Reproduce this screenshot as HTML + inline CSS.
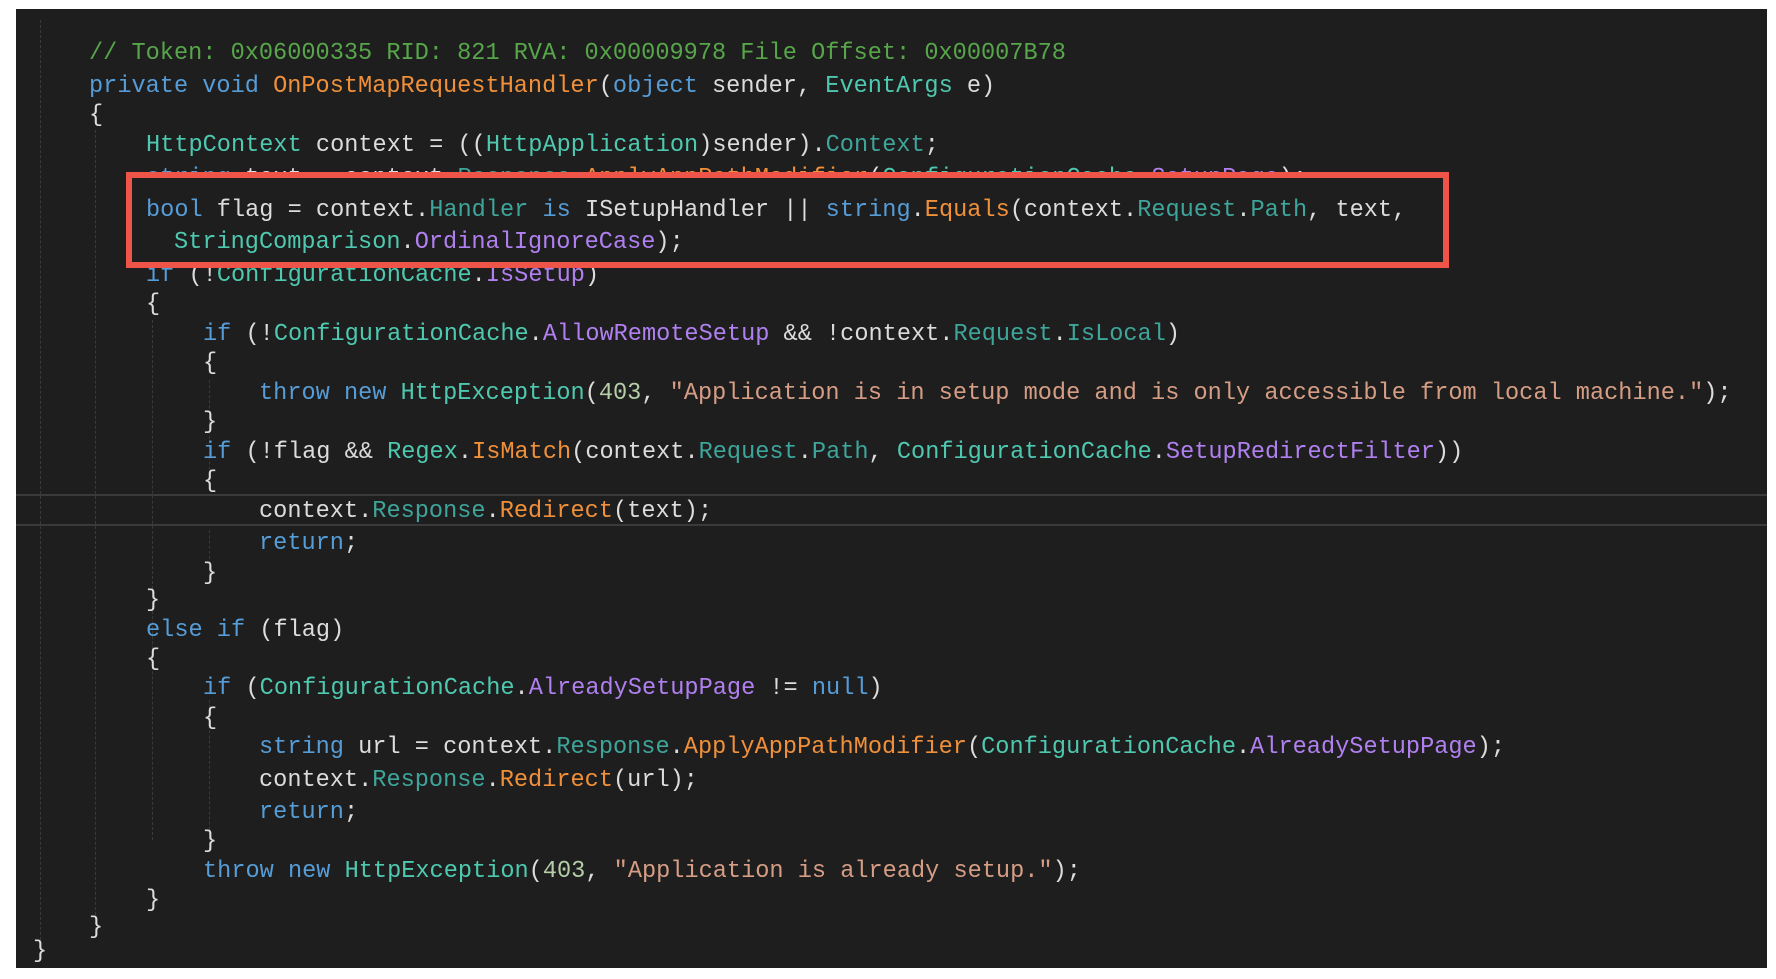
<!DOCTYPE html>
<html><head><meta charset="utf-8"><style>
html,body{margin:0;padding:0;background:#fff;width:1776px;height:979px;overflow:hidden}
#ed{position:absolute;left:16px;top:9px;width:1751px;height:959px;background:#1e1e1e}
.l{position:absolute;height:30px;line-height:30px;white-space:pre;font-family:"Liberation Mono",monospace;font-size:23.6px;color:#dcdcdc;letter-spacing:0;margin-top:3px}
.c{color:#57a64a}.k{color:#569cd6}.m{color:#f0903a}.t{color:#4ec9b0}.p{color:#3ea59b}.v{color:#b180f0}.s{color:#d69d85}.n{color:#b5cea8}
.g{position:absolute;width:0;border-left:1px dashed #3a3a3a}
#box{position:absolute;left:126px;top:172px;width:1311px;height:84px;border:6px solid #ee5548;background:#1e1e1e}
.hl{position:absolute;left:16px;width:1751px;height:0;border-top:2px solid #3a3a3a}
</style></head><body>
<div id="ed"></div>
<div class="g" style="left:40px;top:20px;height:940px"></div>
<div class="g" style="left:95px;top:130px;height:800px"></div>
<div class="g" style="left:152px;top:320px;height:520px"></div>
<div class="g" style="left:209px;top:380px;height:110px"></div>
<div class="g" style="left:209px;top:530px;height:50px"></div>
<div class="g" style="left:209px;top:700px;height:150px"></div>
<div class="hl" style="top:494px"></div>
<div class="hl" style="top:524px"></div>

<div class="l" style="left:89px;top:36px"><span class="c">// Token: 0x06000335 RID: 821 RVA: 0x00009978 File Offset: 0x00007B78</span></div>
<div class="l" style="left:89px;top:69px"><span class="k">private void</span> <span class="m">OnPostMapRequestHandler</span>(<span class="k">object</span> sender, <span class="t">EventArgs</span> e)</div>
<div class="l" style="left:89px;top:98px">{</div>
<div class="l" style="left:146px;top:128px"><span class="t">HttpContext</span> context = ((<span class="t">HttpApplication</span>)sender).<span class="p">Context</span>;</div>
<div class="l" style="left:146px;top:161px"><span class="k">string</span> text = context.<span class="p">Response</span>.<span class="m">ApplyAppPathModifier</span>(<span class="t">ConfigurationCache</span>.<span class="v">SetupPage</span>);</div>
<div class="l" style="left:146px;top:258px"><span class="k">if</span> (!<span class="t">ConfigurationCache</span>.<span class="v">IsSetup</span>)</div>
<div id="box"></div>
<div class="l" style="left:146px;top:193px"><span class="k">bool</span> flag = context.<span class="p">Handler</span> <span class="k">is</span> ISetupHandler || <span class="k">string</span>.<span class="m">Equals</span>(context.<span class="p">Request</span>.<span class="p">Path</span>, text,</div>
<div class="l" style="left:174px;top:225px"><span class="t">StringComparison</span>.<span class="v">OrdinalIgnoreCase</span>);</div>
<div class="l" style="left:146px;top:287px">{</div>
<div class="l" style="left:203px;top:317px"><span class="k">if</span> (!<span class="t">ConfigurationCache</span>.<span class="v">AllowRemoteSetup</span> &amp;&amp; !context.<span class="p">Request</span>.<span class="p">IsLocal</span>)</div>
<div class="l" style="left:203px;top:346px">{</div>
<div class="l" style="left:259px;top:376px"><span class="k">throw new</span> <span class="t">HttpException</span>(<span class="n">403</span>, <span class="s">"Application is in setup mode and is only accessible from local machine."</span>);</div>
<div class="l" style="left:203px;top:405px">}</div>
<div class="l" style="left:203px;top:435px"><span class="k">if</span> (!flag &amp;&amp; <span class="t">Regex</span>.<span class="m">IsMatch</span>(context.<span class="p">Request</span>.<span class="p">Path</span>, <span class="t">ConfigurationCache</span>.<span class="v">SetupRedirectFilter</span>))</div>
<div class="l" style="left:203px;top:464px">{</div>
<div class="l" style="left:259px;top:494px">context.<span class="p">Response</span>.<span class="m">Redirect</span>(text);</div>
<div class="l" style="left:259px;top:526px"><span class="k">return</span>;</div>
<div class="l" style="left:203px;top:556px">}</div>
<div class="l" style="left:146px;top:583px">}</div>
<div class="l" style="left:146px;top:613px"><span class="k">else if</span> (flag)</div>
<div class="l" style="left:146px;top:642px">{</div>
<div class="l" style="left:203px;top:671px"><span class="k">if</span> (<span class="t">ConfigurationCache</span>.<span class="v">AlreadySetupPage</span> != <span class="k">null</span>)</div>
<div class="l" style="left:203px;top:701px">{</div>
<div class="l" style="left:259px;top:730px"><span class="k">string</span> url = context.<span class="p">Response</span>.<span class="m">ApplyAppPathModifier</span>(<span class="t">ConfigurationCache</span>.<span class="v">AlreadySetupPage</span>);</div>
<div class="l" style="left:259px;top:763px">context.<span class="p">Response</span>.<span class="m">Redirect</span>(url);</div>
<div class="l" style="left:259px;top:795px"><span class="k">return</span>;</div>
<div class="l" style="left:203px;top:824px">}</div>
<div class="l" style="left:203px;top:854px"><span class="k">throw new</span> <span class="t">HttpException</span>(<span class="n">403</span>, <span class="s">"Application is already setup."</span>);</div>
<div class="l" style="left:146px;top:883px">}</div>
<div class="l" style="left:89px;top:910px">}</div>
<div class="l" style="left:33px;top:934px">}</div>
</body></html>
